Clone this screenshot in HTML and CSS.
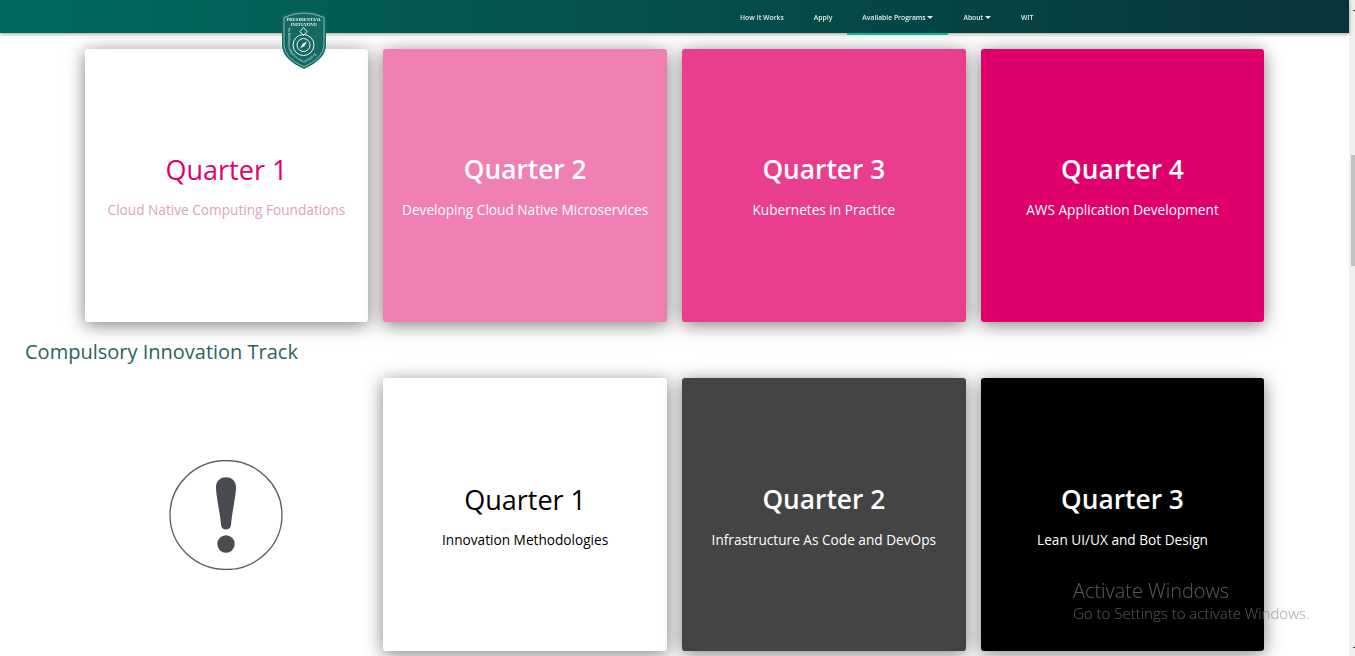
FILE: index.html

```html
<!DOCTYPE html>
<html lang="en">
<head>
	<meta charset="utf-8">
	<title>Available Programs</title>
	<link rel="stylesheet" href="styles.css">
</head>
<body>
	<header class="topbar">
		<a class="logo" href="#">
			<svg viewBox="0 0 44 60" width="44" height="60">
				<path d="M0 7 Q22 -3 44 7 V36 Q44 50 22 60 Q0 50 0 36 Z" fill="#146a62"/>
				<path d="M2 8.500 Q22 -.5 42 8.500 V36 Q42 48.500 22 58 Q2 48.500 2 36 Z" fill="none" stroke="#d5e8e4" stroke-width=".6"/>
				<path id="logo-arc" d="M5.500 19 V35 Q6 46 22 54 Q38 46 38.500 35 V19" fill="none"/>
				<text x="22" y="11.500" class="logo-text">PRESIDENTIAL</text>
				<text x="22" y="16.500" class="logo-text">INITIATIVE</text>
				<text class="logo-small"><textPath href="#logo-arc">for Artificial Intelligence and Computing</textPath></text>
				<path d="M21.500 18.500 L25 22.500 L21.500 26.500 L18 22.500 Z" fill="none" stroke="#eef6f4" stroke-width="1"/>
				<circle cx="21.500" cy="36" r="10.500" fill="none" stroke="#eef6f4" stroke-width="1"/>
				<circle cx="21.500" cy="36" r="6.500" fill="none" stroke="#eef6f4" stroke-width="1"/>
				<path d="M18 39.500 L21 34.500 L25 32.500 L22.500 37 Z" fill="#eef6f4"/>
			</svg>
		</a>
		<nav class="menu">
			<a href="#">How It Works</a>
			<a href="#">Apply</a>
			<a href="#" class="active">Available Programs <i class="caret"></i></a>
			<a href="#">About <i class="caret"></i></a>
			<a href="#">WIT</a>
		</nav>
	</header>

	<main class="content">
		<section class="row">
			<div class="card white pink-title">
				<h3>Quarter 1</h3>
				<p>Cloud Native Computing Foundations</p>
			</div>
			<div class="card pink1">
				<h3>Quarter 2</h3>
				<p>Developing Cloud Native Microservices</p>
			</div>
			<div class="card pink2">
				<h3>Quarter 3</h3>
				<p>Kubernetes in Practice</p>
			</div>
			<div class="card pink3">
				<h3>Quarter 4</h3>
				<p>AWS Application Development</p>
			</div>
		</section>

		<h2 class="track-title">Compulsory Innovation Track</h2>

		<section class="row row-second">
			<div class="notice">
				<svg viewBox="0 0 114 110" width="114" height="110">
					<ellipse cx="57" cy="55" rx="56" ry="54.500" fill="none" stroke="#5a5d60" stroke-width="1.300"/>
					<path d="M47 27 C47 14 67 14 67 27 C67 36 63 52 62 65 C61.500 71 52.500 71 52 65 C51 52 47 36 47 27 Z" fill="#484c50"/>
					<circle cx="57" cy="84" r="8.700" fill="#484c50"/>
				</svg>
			</div>
			<div class="card white">
				<h3>Quarter 1</h3>
				<p>Innovation Methodologies</p>
			</div>
			<div class="card grey">
				<h3>Quarter 2</h3>
				<p>Infrastructure As Code and DevOps</p>
			</div>
			<div class="card black">
				<h3>Quarter 3</h3>
				<p>Lean UI/UX and Bot Design</p>
			</div>
		</section>
	</main>

	<div class="activate">
		<div class="activate-title">Activate Windows</div>
		<div>Go to Settings to activate Windows.</div>
	</div>

	<div class="scrollbar">
		<div class="thumb"></div>
		<i class="mark mark-top"></i>
		<i class="mark mark-bottom"></i>
	</div>
</body>
</html>
```

FILE: styles.css

```css
html, body {
	margin: 0;
	height: 656px;
	overflow: hidden;
	background: #fff;
	font-family: "Open Sans", sans-serif;
}

.topbar {
	height: 33px;
	margin-right: 6px;
	display: flex;
	background: linear-gradient(to right, #006a5e, #083439);
	box-shadow: 0 1px 4px rgba(0, 0, 0, .4);
	position: relative;
	z-index: 5;
}
.logo {
	position: absolute;
	left: 282px;
	top: 9px;
	line-height: 0;
}
.logo-text {
	font-family: "Liberation Serif", serif;
	font-size: 4.700px;
	font-weight: 700;
	fill: #e6f2ef;
	text-anchor: middle;
}
.logo-small {
	font-size: 3.100px;
	fill: #cfe6e1;
}
.menu {
	margin-left: 725px;
	display: flex;
	height: 35px;
}
.menu a {
	color: #e4eeec;
	font-size: 6.800px;
	font-weight: 600;
	text-decoration: none;
	line-height: 35px;
	padding: 0 15px;
	box-sizing: border-box;
	white-space: nowrap;
}
.menu a.active {
	border-bottom: 2px solid #13b88f;
}
.caret {
	display: inline-block;
	border: 3px solid transparent;
	border-top-color: #e4eeec;
	border-bottom: 0;
	vertical-align: 1px;
}

.content {
	padding: 16px 0 0 25px;
}
.row {
	display: grid;
	grid-template-columns: repeat(4, 283.700px);
	gap: 15px;
	margin-left: 59.600px;
}
.card {
	height: 273px;
	border-radius: 3px;
	box-shadow: 0 3px 18px rgba(0, 0, 0, .5);
	color: #fff;
	text-align: center;
	display: flex;
	flex-direction: column;
	justify-content: center;
	padding-bottom: 1px;
	box-sizing: border-box;
}
.row-second .card {
	padding: 1px 0 0;
}
.card h3 {
	margin: 0;
	font-size: 26.300px;
	font-weight: 640;
	line-height: 37px;
}
.card p {
	margin: 12px 0 0;
	font-size: 13.650px;
	font-weight: 500;
	line-height: 20px;
}
.white {
	background: #fff;
	color: #000;
}
.white h3 {
	font-size: 27px;
	font-weight: 500;
}
.white p {
	font-weight: 400;
}
.pink-title h3 {
	color: #e0006b;
}
.pink-title p {
	color: #dba3c1;
}
.pink1 {
	background: #f07fb3;
}
.pink2 {
	background: #e93d8e;
}
.pink3 {
	background: #e0006b;
}
.grey {
	background: #444;
}
.black {
	background: #000;
}

.track-title {
	margin: 16px 0 13px;
	font-size: 20px;
	font-weight: 500;
	line-height: 27px;
	color: #2a635d;
}

.notice {
	display: flex;
	align-items: center;
	justify-content: center;
}

.activate {
	position: fixed;
	left: 1073px;
	top: 579px;
	color: rgba(255, 255, 255, .35);
	mix-blend-mode: difference;
	font-size: 15px;
	font-weight: 300;
	line-height: 20px;
	white-space: nowrap;
}
.activate-title {
	font-size: 19.900px;
	line-height: 24px;
}

.scrollbar {
	position: fixed;
	right: 0;
	top: 0;
	width: 6px;
	height: 656px;
	background: #f0f0f0;
}
.thumb {
	margin: 155px 0 0 2px;
	height: 111px;
	background: #c1c1c1;
}
.mark {
	position: absolute;
	right: 0;
	width: 2px;
	height: 1px;
	background: #444;
}
.mark-top {
	top: 10px;
}
.mark-bottom {
	top: 647px;
}
```
